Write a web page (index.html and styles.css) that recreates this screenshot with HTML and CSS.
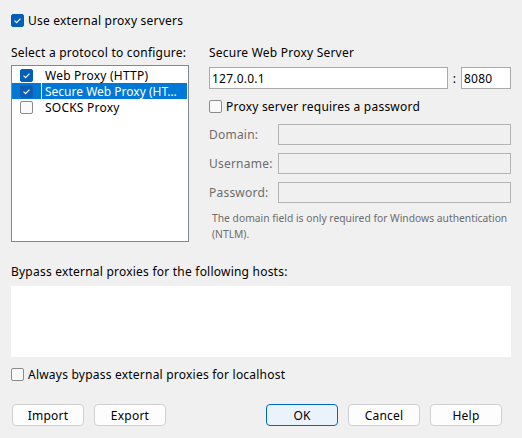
FILE: index.html
```html
<!DOCTYPE html>
<html>
<head>
<meta charset="utf-8">
<link rel="stylesheet" href="styles.css">
</head>
<body>
<div class="dialog">
  <div class="check top-check">
    <span class="box checked"><svg viewBox="0 0 13 13"><path d="M3 6.7 L5.4 9 L10 4.2"/></svg></span>
    <span>Use external proxy servers</span>
  </div>

  <div class="main">
    <div class="left">
      <div class="caption">Select a protocol to configure:</div>
      <div class="list">
        <div class="item">
          <span class="cell-box"><span class="box checked"><svg viewBox="0 0 13 13"><path d="M3 6.7 L5.4 9 L10 4.2"/></svg></span></span>
          <span class="item-text">Web Proxy (HTTP)</span>
        </div>
        <div class="item selected">
          <span class="cell-box"><span class="box checked"><svg viewBox="0 0 13 13"><path d="M3 6.7 L5.4 9 L10 4.2"/></svg></span></span>
          <span class="item-text">Secure Web Proxy (HT…</span>
        </div>
        <div class="item">
          <span class="cell-box"><span class="box"></span></span>
          <span class="item-text">SOCKS Proxy</span>
        </div>
      </div>
    </div>

    <div class="right">
      <div class="caption">Secure Web Proxy Server</div>
      <div class="server-row">
        <div class="input host">127.0.0.1</div>
        <span class="colon">:</span>
        <div class="input port">8080</div>
      </div>
      <div class="check pw-check">
        <span class="box"></span>
        <span>Proxy server requires a password</span>
      </div>
      <div class="cred-grid">
        <span class="cred-label">Domain:</span><div class="input disabled"></div>
        <span class="cred-label">Username:</span><div class="input disabled"></div>
        <span class="cred-label">Password:</span><div class="input disabled"></div>
      </div>
      <div class="note">The domain field is only required for Windows authentication<br>(NTLM).</div>
    </div>
  </div>

  <div class="bypass-label">Bypass external proxies for the following hosts:</div>
  <div class="bypass-area"></div>

  <div class="check local-check">
    <span class="box"></span>
    <span>Always bypass external proxies for localhost</span>
  </div>

  <div class="buttons">
    <div class="btn-group">
      <button class="btn">Import</button>
      <button class="btn">Export</button>
    </div>
    <div class="btn-group">
      <button class="btn default">OK</button>
      <button class="btn">Cancel</button>
      <button class="btn">Help</button>
    </div>
  </div>
</div>
</body>
</html>
```

FILE: styles.css
```css
* { box-sizing: border-box; }
html, body {
  margin: 0;
  padding: 0;
  background: #f0f0f0;
}
body {
  width: 522px;
  height: 438px;
  overflow: hidden;
  font-family: "Noto Sans", "Segoe UI", sans-serif;
  font-size: 12px;
  letter-spacing: 0.22px;
  color: #000;
}
.dialog {
  padding: 13px 11px 0 11px;
  width: 522px;
}
.check {
  display: flex;
  align-items: center;
  height: 16px;
  line-height: 17px;
  white-space: nowrap;
}
.check .box { margin-right: 4px; }
.box {
  display: inline-block;
  flex: none;
  width: 13px;
  height: 13px;
  border: 1px solid #8b8b8b;
  border-radius: 2px;
  background: #fafafa;
}
.box.checked {
  background: #005fb8;
  border-color: #005fb8;
}
.box svg {
  display: block;
  width: 11px;
  height: 11px;
  margin: 0;
}
.box svg path {
  fill: none;
  stroke: #fff;
  stroke-width: 1.3;
}
.top-check { height: 15px; }

.main {
  display: flex;
  gap: 20px;
  margin-top: 16px;
}
.left { width: 178px; }
.right { width: 302px; }
.caption {
  height: 16px;
  line-height: 17px;
  white-space: nowrap;
}
.list {
  margin-top: 5px;
  height: 177px;
  border: 1px solid #828790;
  background: #fff;
  padding-top: 1px;
}
.item {
  display: flex;
  height: 16px;
  white-space: nowrap;
}
.cell-box {
  width: 29px;
  flex: none;
  display: flex;
  align-items: center;
  padding-left: 8px;
}
.item-text {
  padding-left: 4px;
  padding-top: 1px;
  line-height: 15px;
  flex: 1;
  min-width: 0;
  overflow: hidden;
  margin-right: 1px;
}
.item.selected .cell-box,
.item.selected .item-text {
  background: #0078d7;
  color: #fff;
}
.item.selected .item-text {
  margin-left: 1px;
  padding-left: 3px;
  letter-spacing: 0;
}
.item.selected .box.checked {
  background: #0a5fb4;
  border-color: #1b5fa8;
}

.server-row {
  display: flex;
  align-items: center;
  margin-top: 7px;
  height: 22px;
}
.input {
  height: 21px;
  border: 1px solid #a9a9a9;
  background: #fff;
  line-height: 19px;
  padding-left: 2px;
  white-space: nowrap;
}
.host { width: 239px; height: 22px; line-height: 21px; }
.colon { width: 13px; text-align: center; }
.port { width: 50px; height: 22px; line-height: 21px; }
.pw-check { margin-top: 9px; }
.cred-grid {
  display: grid;
  grid-template-columns: 69px 233px;
  row-gap: 8px;
  margin-top: 10px;
  align-items: center;
}
.cred-label { color: #6d6d6d; }
.input.disabled {
  background: #f0f0f0;
  border-color: #b4b4b4;
}
.note {
  margin-top: 7px;
  padding-left: 3px;
  font-size: 10.3px;
  letter-spacing: 0;
  line-height: 16px;
  color: #6d6d6d;
  white-space: nowrap;
}

.bypass-label {
  margin-top: 21px;
  height: 16px;
  line-height: 17px;
}
.bypass-area {
  margin-top: 7px;
  height: 71px;
  background: #fff;
}
.local-check { margin-top: 9px; }

.buttons {
  display: flex;
  justify-content: space-between;
  margin-top: 22px;
  margin-left: 1px;
  margin-right: 9px;
}
.btn-group {
  display: flex;
  gap: 10px;
}
.btn {
  width: 72px;
  height: 22px;
  font-family: inherit;
  font-size: 12px;
  letter-spacing: 0.22px;
  color: #000;
  background: #fdfdfd;
  border: 1px solid #d0d0d0;
  border-radius: 4px;
  padding: 0;
}
.btn.default {
  background: #eaf3fc;
  border-color: #0067c0;
}
```
